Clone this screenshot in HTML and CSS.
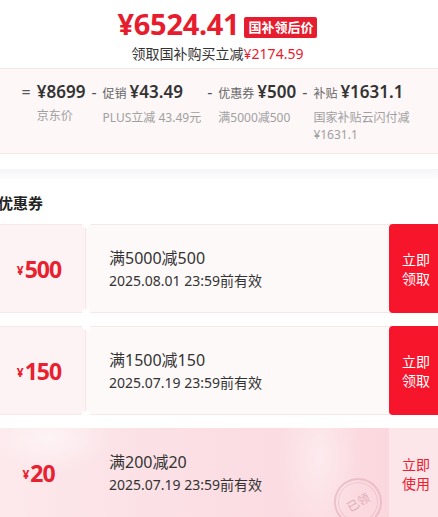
FILE: index.html
```html
<!DOCTYPE html>
<html lang="zh-CN">
<head>
<meta charset="utf-8">
<title>国补价格</title>
<link rel="stylesheet" href="styles.css">
</head>
<body>
<div class="page">
  <header class="head">
    <div class="price-line">
      <span class="price">¥6524.41</span>
      <span class="badge">国补领后价</span>
    </div>
    <div class="save">领取国补购买立减<span class="red">¥2174.59</span></div>
  </header>

  <section class="breakdown">
    <div class="op">=</div>
    <div class="item">
      <div class="main"><span class="val">¥8699</span></div>
      <div class="sub">京东价</div>
    </div>
    <div class="op">-</div>
    <div class="item">
      <div class="main"><span class="lbl">促销</span><span class="val">¥43.49</span></div>
      <div class="sub">PLUS立减 43.49元</div>
    </div>
    <div class="op">-</div>
    <div class="item">
      <div class="main"><span class="lbl">优惠券</span><span class="val">¥500</span></div>
      <div class="sub">满5000减500</div>
    </div>
    <div class="op">-</div>
    <div class="item item-narrow">
      <div class="main"><span class="lbl">补贴</span><span class="val">¥1631.1</span></div>
      <div class="sub">国家补贴云闪付减¥1631.1</div>
    </div>
  </section>

  <div class="sep"></div>

  <section class="coupons">
    <h2 class="title">优惠券</h2>

    <div class="coupon">
      <div class="amt"><span class="cur">¥</span>500</div>
      <div class="info">
        <div class="cond">满5000减500</div>
        <div class="date">2025.08.01 23:59前有效</div>
      </div>
      <div class="btn">立即<br>领取</div>
    </div>

    <div class="coupon">
      <div class="amt"><span class="cur">¥</span>150</div>
      <div class="info">
        <div class="cond">满1500减150</div>
        <div class="date">2025.07.19 23:59前有效</div>
      </div>
      <div class="btn">立即<br>领取</div>
    </div>

    <div class="coupon got">
      <div class="amt"><span class="cur">¥</span>20</div>
      <div class="info">
        <div class="cond">满200减20</div>
        <div class="date">2025.07.19 23:59前有效</div>
        <div class="stamp"><span>已领</span></div>
      </div>
      <div class="btn">立即<br>使用</div>
    </div>
  </section>
</div>
</body>
</html>
```

FILE: styles.css
```css
html, body {
  margin: 0;
  padding: 0;
  overflow: hidden;
  background: #fff;
}
body {
  font-family: "Noto Sans", "Noto Sans CJK SC", sans-serif;
  color: #333;
}
.page {
  width: 455px;
  margin-left: -10px;
}

/* header */
.head {
  padding-top: 4px;
  text-align: center;
}
.price-line {
  display: flex;
  justify-content: center;
  align-items: center;
  height: 40px;
  gap: 5px;
}
.price {
  font-size: 29px;
  font-weight: 700;
  color: #e61d2e;
  letter-spacing: -0.3px;
  line-height: 40px;
}
.badge {
  background: #e61d2e;
  color: #fff;
  font-size: 13px;
  font-weight: 700;
  line-height: 21px;
  padding: 0 4px;
  border-radius: 2px;
  margin-top: 6px;
}
.save {
  font-size: 14px;
  line-height: 20px;
  color: #333;
}
.red { color: #e61d2e; }

/* breakdown */
.breakdown {
  margin-top: 4px;
  display: flex;
  justify-content: center;
  align-items: flex-start;
  gap: 6px;
  background: #fdf7f8;
  border-top: 1px solid #f8e3e6;
  border-bottom: 1px solid #f8e3e6;
  padding: 13px 0 10px;
}
.op {
  font-size: 16px;
  line-height: 20px;
  color: #555;
}
.item { display: flex; flex-direction: column; }
.item-narrow { width: 100px; }
.main {
  display: flex;
  align-items: baseline;
  gap: 3px;
  line-height: 20px;
  white-space: nowrap;
}
.lbl {
  font-size: 12px;
  color: #666;
}
.val {
  font-size: 17px;
  font-weight: 600;
  color: #333;
}
.sub {
  margin-top: 5px;
  font-size: 12px;
  line-height: 17px;
  color: #a0a0a0;
}

.sep {
  margin-top: 15px;
  height: 10px;
  background: linear-gradient(#f5f5f8, #fdfdfe);
}

/* coupons */
.coupons { padding-bottom: 20px; }
.title {
  margin: 13px 0 10px 8px;
  font-size: 15px;
  font-weight: 700;
  line-height: 22px;
  color: #222;
}
.coupon {
  position: relative;
  display: flex;
  height: 89px;
  margin-bottom: 13px;
  border-radius: 4px;
  background: #fef9f9;
  border: 1px solid #f6e7e9;
  box-sizing: border-box;
}
.amt {
  width: 95px;
  flex: none;
  display: flex;
  align-items: center;
  justify-content: center;
  background: #fdf3f4;
  color: #e8202f;
  font-size: 23px;
  font-weight: 700;
  letter-spacing: -1px;
  border-right: 1px solid #f6e6e8;
  position: relative;
  padding-left: 2px;
  box-sizing: border-box;
}
.amt::before,
.amt::after {
  content: "";
  position: absolute;
  right: -5px;
  width: 8px;
  height: 8px;
  border-radius: 50%;
  background: #fff;
}
.amt::before { top: -5px; }
.amt::after { bottom: -5px; }
.cur {
  font-size: 12px;
  margin-right: 1px;
  margin-top: 4px;
  letter-spacing: 0;
}
.info {
  flex: 1;
  position: relative;
  padding: 22px 0 0 23px;
}
.cond {
  font-size: 16px;
  line-height: 22px;
  color: #333;
}
.date {
  margin-top: 2px;
  font-size: 14px;
  line-height: 20px;
  color: #333;
}
.btn {
  flex: none;
  width: 56px;
  margin: -1px -1px -1px 0;
  background: #f7152b;
  color: #fff;
  border-radius: 4px;
  font-size: 14px;
  line-height: 19px;
  padding: 26px 0 0 13px;
  box-sizing: border-box;
}

.got {
  border: none;
  background:
    radial-gradient(ellipse 90px 50px at 60px 10px, rgba(255,255,255,0.55), rgba(255,255,255,0) 70%),
    radial-gradient(ellipse 60px 120px at 330px 30px, rgba(255,255,255,0.45), rgba(255,255,255,0) 70%),
    linear-gradient(90deg, #fde9ec 0%, #fbe0e5 40%, #fbd6dd 100%);
}
.got .amt {
  background: transparent;
  border-right: none;
}
.got .amt::before, .got .amt::after { display: none; }
.got .info { padding-left: 24px; padding-top: 23px; }
.got .btn {
  background: #fde6ea;
  color: #e8202f;
  border-radius: 0;
  margin: 0;
  padding-top: 27px;
}
.stamp {
  position: absolute;
  left: 249px;
  top: 50px;
  width: 48px;
  height: 48px;
  border-radius: 50%;
  border: 2px solid rgba(222, 170, 180, 0.55);
  box-sizing: border-box;
  display: flex;
  align-items: center;
  justify-content: center;
  transform: rotate(-30deg);
}
.stamp span {
  font-size: 12px;
  color: rgba(214, 160, 170, 0.75);
  border: 1px solid rgba(222, 170, 180, 0.4);
  border-radius: 50%;
  width: 38px;
  height: 38px;
  display: flex;
  align-items: center;
  justify-content: center;
}
```
